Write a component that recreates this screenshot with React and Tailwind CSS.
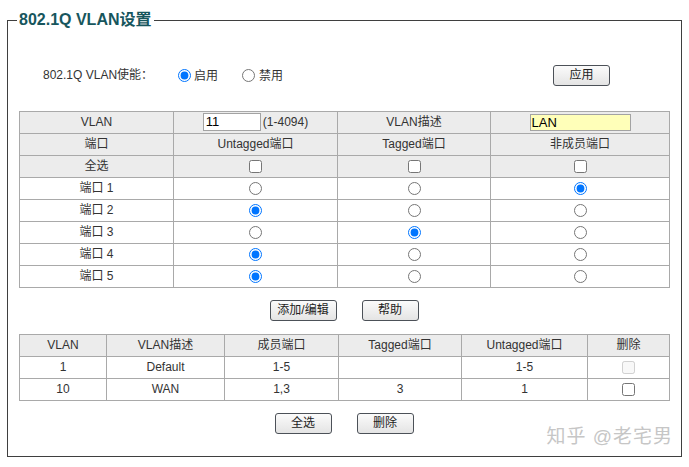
import React from "react";

const font = { fontFamily: '"Liberation Sans", Arial, "Noto Sans CJK SC", sans-serif' };

const Btn = ({ children, w }) => (
  <button
    type="button"
    className={`h-[21px] ${w} rounded-[3px] border border-[#4c5158] bg-gradient-to-b from-[#fbfbfb] to-[#e4e4e4] text-[12px] leading-[19px] text-[#222]`}
  >
    {children}
  </button>
);

const Radio = ({ name, checked }) => (
  <input
    type="radio"
    name={name}
    defaultChecked={checked}
    className="m-0 h-[13px] w-[13px] align-middle"
  />
);

const Check = ({ disabled }) => (
  <input
    type="checkbox"
    disabled={disabled}
    className="m-0 h-[13px] w-[13px] align-middle"
  />
);

const ports = [
  { name: "端口 1", sel: 2 },
  { name: "端口 2", sel: 0 },
  { name: "端口 3", sel: 1 },
  { name: "端口 4", sel: 0 },
  { name: "端口 5", sel: 0 },
];

const vlans = [
  { id: "1", desc: "Default", member: "1-5", tagged: "", untagged: "1-5", fixed: true },
  { id: "10", desc: "WAN", member: "1,3", tagged: "3", untagged: "1", fixed: false },
];

const td = "h-[22px] border border-[#a9a9a9] p-0 pb-[1px] text-center align-middle";

export default function App() {
  return (
    <div className="min-h-[467px] bg-white pt-[11px] text-[12px] text-[#333]" style={font}>
      {/* Fieldset */}
      <fieldset className="relative ml-[7px] w-[674px] border border-[#3f3f3f] px-[11px] pb-[22px]">
        <legend className="ml-[-2px] px-[2px] text-[16px] font-bold leading-[18px] text-[#17565d]">
          802.1Q VLAN设置
        </legend>

        {/* Enable row */}
        <div className="mt-[36px] flex h-[21px] items-center">
          <span className="ml-[24px] w-[135px] pb-[1px]">802.1Q VLAN使能：</span>
          <label className="flex items-center">
            <Radio name="enable" checked />
            <span className="ml-[3px]">启用</span>
          </label>
          <label className="ml-[24px] flex items-center">
            <Radio name="enable" />
            <span className="ml-[4px]">禁用</span>
          </label>
          <div className="ml-auto mr-[60px]">
            <Btn w="w-[57px]">应用</Btn>
          </div>
        </div>

        {/* VLAN edit table */}
        <table className="mt-[25px] w-[650px] table-fixed border-collapse">
          <colgroup>
            <col className="w-[154px]" />
            <col className="w-[164px]" />
            <col className="w-[153px]" />
            <col className="w-[179px]" />
          </colgroup>
          <tbody>
            <tr className="bg-[#ececec]">
              <td className={td}>VLAN</td>
              <td className={td}>
                <span className="inline-flex items-center">
                  <input
                    defaultValue="11"
                    className="h-[18px] w-[58px] border border-[#a3a3a3] bg-white px-[2px] text-[13px] leading-[16px] text-black outline-none"
                  />
                  <span className="ml-[2px]">(1-4094)</span>
                </span>
              </td>
              <td className={td}>VLAN描述</td>
              <td className={td}>
                <input
                  defaultValue="LAN"
                  className="h-[17px] w-[101px] border border-[#a3a3a3] bg-[#ffffb9] px-[1px] align-middle text-[13px] leading-[15px] text-black outline-none"
                />
              </td>
            </tr>
            <tr className="bg-[#ececec]">
              <td className={td}>端口</td>
              <td className={td}>Untagged端口</td>
              <td className={td}>Tagged端口</td>
              <td className={td}>非成员端口</td>
            </tr>
            <tr className="bg-[#ececec]">
              <td className={td}>全选</td>
              <td className={td}><Check /></td>
              <td className={td}><Check /></td>
              <td className={td}><Check /></td>
            </tr>
            {ports.map((p, i) => (
              <tr key={p.name} className="bg-white">
                <td className={td}>{p.name}</td>
                {[0, 1, 2].map((c) => (
                  <td key={c} className={td}>
                    <Radio name={`port${i}`} checked={p.sel === c} />
                  </td>
                ))}
              </tr>
            ))}
          </tbody>
        </table>

        {/* Buttons */}
        <div className="mt-[12px] flex w-[650px] justify-center gap-[25px]">
          <Btn w="w-[67px]">添加/编辑</Btn>
          <Btn w="w-[57px]">帮助</Btn>
        </div>

        {/* VLAN list */}
        <table className="mt-[13px] w-[650px] table-fixed border-collapse">
          <colgroup>
            <col className="w-[87px]" />
            <col className="w-[118px]" />
            <col className="w-[114px]" />
            <col className="w-[123px]" />
            <col className="w-[126px]" />
            <col className="w-[82px]" />
          </colgroup>
          <tbody>
            <tr className="bg-[#ececec]">
              <td className={td}>VLAN</td>
              <td className={td}>VLAN描述</td>
              <td className={td}>成员端口</td>
              <td className={td}>Tagged端口</td>
              <td className={td}>Untagged端口</td>
              <td className={td}>删除</td>
            </tr>
            {vlans.map((v) => (
              <tr key={v.id} className="bg-white">
                <td className={td}>{v.id}</td>
                <td className={td}>{v.desc}</td>
                <td className={td}>{v.member}</td>
                <td className={td}>{v.tagged}</td>
                <td className={td}>{v.untagged}</td>
                <td className={td}><Check disabled={v.fixed} /></td>
              </tr>
            ))}
          </tbody>
        </table>

        <div className="mt-[12px] flex w-[650px] justify-center gap-[25px]">
          <Btn w="w-[57px]">全选</Btn>
          <Btn w="w-[57px]">删除</Btn>
        </div>

        {/* Watermark */}
        <div className="absolute bottom-[5px] right-[8px] text-[19px] tracking-[1px] text-[#c6c6c6]">
          知乎 @老宅男
        </div>
      </fieldset>
    </div>
  );
}
